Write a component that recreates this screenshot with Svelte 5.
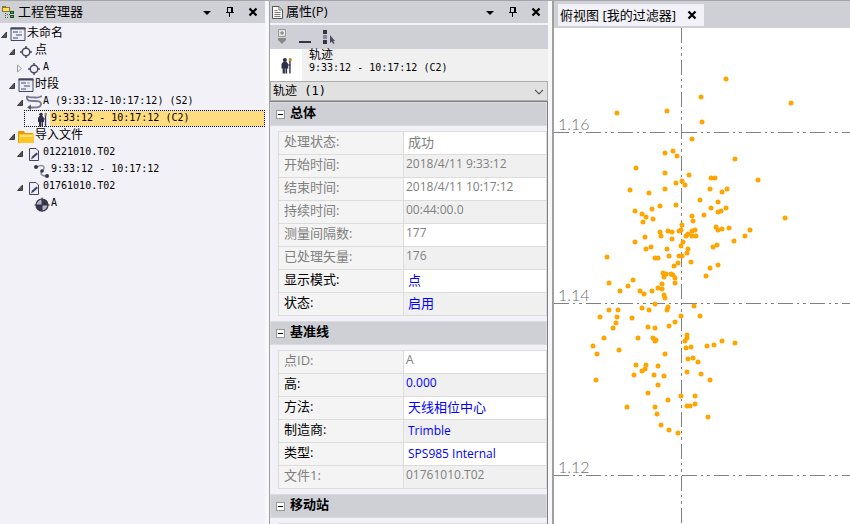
<script>
  let tree = $state([
    { id: 1, depth: 0, icon: 'project', text: '未命名', arrow: 'open' },
    { id: 2, depth: 1, icon: 'point', text: '点', arrow: 'open' },
    { id: 3, depth: 2, icon: 'point', text: 'A', latin: true, arrow: 'closed' },
    { id: 4, depth: 1, icon: 'project', text: '时段', arrow: 'open' },
    { id: 5, depth: 2, icon: 'track', text: 'A (9:33:12-10:17:12) (S2)', latin: true, arrow: 'open' },
    { id: 6, depth: 3, icon: 'rover', text: '9:33:12 - 10:17:12 (C2)', latin: true },
    { id: 7, depth: 1, icon: 'folder', text: '导入文件', arrow: 'open' },
    { id: 8, depth: 2, icon: 'file', text: '01221010.T02', latin: true, arrow: 'open' },
    { id: 9, depth: 3, icon: 'path', text: '9:33:12 - 10:17:12', latin: true },
    { id: 10, depth: 2, icon: 'file', text: '01761010.T02', latin: true, arrow: 'open' },
    { id: 11, depth: 3, icon: 'base', text: 'A', latin: true }
  ]);
  let selected = $state(6);

  let groups = $state([
    {
      title: '总体',
      open: true,
      rows: [
        { label: '处理状态:', value: '成功', cjk: true },
        { label: '开始时间:', value: '2018/4/11 9:33:12' },
        { label: '结束时间:', value: '2018/4/11 10:17:12' },
        { label: '持续时间:', value: '00:44:00.0' },
        { label: '测量间隔数:', value: '177' },
        { label: '已处理矢量:', value: '176' },
        { label: '显示模式:', value: '点', cjk: true, edit: true },
        { label: '状态:', value: '启用', cjk: true, edit: true }
      ]
    },
    {
      title: '基准线',
      open: true,
      rows: [
        { label: '点ID:', value: 'A' },
        { label: '高:', value: '0.000', edit: true },
        { label: '方法:', value: '天线相位中心', cjk: true, edit: true },
        { label: '制造商:', value: 'Trimble', name: true, edit: true },
        { label: '类型:', value: 'SPS985 Internal', name: true, edit: true },
        { label: '文件1:', value: '01761010.T02' }
      ]
    },
    { title: '移动站', open: true, rows: [{ label: '', value: '' }] }
  ]);

  // grid lines, measured inside the plot
  const gridX = 127;
  const gridY = [
    { y: 104, label: '1.16' },
    { y: 275, label: '1.14' },
    { y: 447, label: '1.12' }
  ];

  // epochs are stored in window coordinates, the plot starts at origin
  const origin = [554, 28];
  const epochs = [
    [617,113],[667,111],[665,153],[673,151],[677,156],[636,168],[665,173],[676,183],[682,181],[685,185],
    [630,190],[649,193],[665,189],[635,211],[652,209],[660,206],[676,205],[642,214],[646,217],[653,219],
    [726,79],[701,97],[702,122],[692,139],[791,103],[735,159],[689,175],[711,178],[715,178],[758,180],
    [710,189],[722,192],[727,189],[700,200],[718,202],[711,208],[726,208],[718,212],[721,211],[692,216],
    [704,215],[785,218],[693,221],[643,222],[660,232],[661,236],[668,231],[672,232],[679,231],[682,225],
    [681,230],[645,237],[672,239],[635,242],[683,242],[681,246],[646,249],[651,247],[667,249],[607,257],
    [655,258],[658,258],[669,256],[679,256],[682,256],[678,263],[674,266],[663,273],[666,274],[664,277],
    [671,274],[673,275],[675,278],[675,283],[609,283],[633,280],[628,286],[620,291],[640,291],[644,294],
    [652,291],[662,284],[658,288],[662,289],[664,295],[665,298],[655,304],[642,308],[649,310],[668,307],
    [667,310],[609,310],[618,310],[600,317],[617,317],[632,318],[681,316],[616,323],[613,328],[675,322],
    [669,326],[648,327],[655,328],[716,227],[718,230],[722,229],[729,228],[750,230],[745,236],[734,241],
    [713,247],[717,245],[695,230],[692,231],[688,234],[686,236],[692,236],[696,236],[688,249],[687,253],
    [691,262],[718,265],[710,268],[706,276],[694,306],[700,316],[604,338],[593,346],[597,354],[619,350],
    [638,338],[653,338],[656,340],[655,341],[665,354],[596,380],[636,365],[646,365],[645,369],[642,371],
    [634,375],[658,366],[654,375],[664,376],[658,385],[648,393],[627,407],[668,400],[655,407],[657,414],
    [661,425],[669,430],[678,433],[681,396],[695,396],[695,404],[687,406],[690,406],[708,417],[710,380],
    [701,374],[687,372],[698,362],[693,358],[688,359],[686,348],[691,347],[707,346],[714,345],[722,341],
    [735,343],[685,341],[687,338],[687,335]
  ];

  function toggle(item) {
    if (item.arrow) item.arrow = item.arrow == 'open' ? 'closed' : 'open';
  }
</script>

{#snippet closeIcon()}
  <svg width="10" height="10" viewBox="0 0 10 10"><path d="M1.5 1.5 8.5 8.5M8.5 1.5 1.5 8.5" stroke="#000" stroke-width="2.2" /></svg>
{/snippet}

{#snippet controls()}
  <div class="controls">
    <button aria-label="菜单"><svg width="10" height="10" viewBox="0 0 10 10"><path d="M1 4h8L5 8z" fill="#000" /></svg></button>
    <button aria-label="固定">
      <svg width="10" height="10" viewBox="0 0 10 10" shape-rendering="crispEdges">
        <path d="M2 0h6v1H2zM2 0h1v5H2zM6 0h2v5H6zM1 5h8v1H1zM4 6h1v4H4z" fill="#000" />
      </svg>
    </button>
    <button aria-label="关闭">{@render closeIcon()}</button>
  </div>
{/snippet}

{#snippet rover(size)}
  <svg width={size} height={size} viewBox="0 0 16 16">
    <circle cx="7" cy="3.500" r="1.800" fill="#2f3046" />
    <path d="M4 7 5.500 5h3L10 7v4H9v4.500H7.500V11H7v4.500H5V11H4z" fill="#2f3046" />
    <path d="M11.500 4v11.500" stroke="#3c3d55" stroke-width="1.300" />
    <path d="M9 8h3" stroke="#3c3d55" />
    <rect x="10.500" y="2" width="2.500" height="2.500" fill="#b98a2c" />
  </svg>
{/snippet}

{#snippet icon(kind)}
  {#if kind == 'rover'}
    {@render rover(16)}
  {:else}
    <svg width="16" height="16" viewBox="0 0 16 16">
      {#if kind == 'project'}
        <path d="M1 2h14v12.500H1z" fill="#ececf6" stroke="#45465f" />
        <path d="M.5 1.500h15v2H.5z" fill="#45465f" />
        <path d="M3 5h5v2H3zM6 8h6v2H6zM3 11h5v2H3z" fill="#9a9ab0" />
        <path d="M9 5h3v2H9z" fill="#c4c4d4" />
      {:else if kind == 'point'}
        <circle cx="8" cy="9" r="3.800" fill="#f4f4fa" stroke="#4a4b62" stroke-width="1.500" />
        <path d="M8 3v3M8 12v3M2 9h3M11 9h3" stroke="#4a4b62" stroke-width="1.500" />
      {:else if kind == 'track'}
        <path d="M1 2c2 2.500 5 1 8 1.500s5-.5 7-1.500M1 2c-1 5 3 5 6 5 4 0 8-.5 8 3S11 13.500 3 13.500" fill="none" stroke="#77788c" stroke-width="1.800" />
        <path d="M5 10.500v5.500L1 13.500z" fill="#55566c" />
      {:else if kind == 'folder'}
        <path d="M0 3h6l1 2h8v10H0z" fill="#e79a00" />
        <path d="M1 6h15v9H1z" fill="#ffc629" />
        <path d="M2 7h13v2H2z" fill="#ffe07c" />
      {:else if kind == 'file'}
        <path d="M3.500 3.500H10L12.500 6v9.500h-9z" fill="#eeeef8" stroke="#44455c" />
        <path d="M5 14.500 6 11.500l4.500-4 1.500 1.500-4.500 4z" fill="#44455c" />
      {:else if kind == 'path'}
        <path d="M3 5c5-3 9-1 6 3-3 3-3 6 4 6" fill="none" stroke="#8c8d9f" stroke-width="1.500" />
        <circle cx="2" cy="5" r="2" fill="#34354b" />
        <circle cx="8" cy="9" r="1.800" fill="#34354b" />
        <circle cx="13" cy="14" r="2" fill="#34354b" />
      {:else if kind == 'base'}
        <circle cx="8" cy="9" r="6" fill="#b4b4c4" stroke="#34354b" stroke-width="1.200" />
        <path d="M8 9V3a6 6 0 0 1 6 6zM8 9v6a6 6 0 0 1-6-6z" fill="#34354b" />
        <path d="M8 1.500v15M.5 9h15" stroke="#34354b" />
      {/if}
    </svg>
  {/if}
{/snippet}

<div class="app">
  <aside class="panel explorer">
    <header class="title">
      <svg width="13" height="14" viewBox="0 0 13 14" shape-rendering="crispEdges">
        <path d="M0 1h4v1h4v5H0z" fill="#8a7a28" />
        <path d="M1 3h6v3H1z" fill="#ffe26a" />
        <path d="M3 8h1v1H3zM3 10h1v1H3zM3 12h1v1H3zM5 9h1v1H5zM5 12h1v1H5zM7 9h1v1H7z" fill="#555" />
        <path d="M8 6h4v3H8zM8 10h4v3H8z" fill="#1c4a20" />
        <path d="M9 7h2v1H9zM9 11h2v1H9z" fill="#38c848" />
      </svg>
      <h2>工程管理器</h2>
      {@render controls()}
    </header>
    <ul class="tree">
      {#each tree as item (item.id)}
        <li class="depth{item.depth}" class:selected={selected == item.id}>
          {#if item.arrow}
            <button class="arrow" aria-label="展开" onclick={() => toggle(item)}>
              <svg width="8" height="9" viewBox="0 0 8 9">
                {#if item.arrow == 'open'}
                  <path d="M5.500 2v5.500H.5z" fill="#555" stroke="#222" stroke-width=".8" />
                {:else}
                  <path d="M.5 1v7L4.500 4.500z" fill="#fff" stroke="#999" />
                {/if}
              </svg>
            </button>
          {:else}
            <span class="arrow"></span>
          {/if}
          {@render icon(item.icon)}
          <button class="name" class:latin={item.latin} onclick={() => (selected = item.id)}>{item.text}</button>
        </li>
      {/each}
    </ul>
  </aside>

  <section class="panel props">
    <header class="title">
      <svg width="11" height="13" viewBox="0 0 11 13">
        <path d="M.5.5H7L10.500 4v8.500H.5z" fill="#fff" stroke="#555" />
        <path d="M7 .5V4h3.500M2.500 4.500h3M2.500 6.500h6M2.500 8.500h6M2.500 10.500h6" fill="none" stroke="#777" />
      </svg>
      <h2>属性(P)</h2>
      {@render controls()}
    </header>
    <div class="toolbar">
      <button aria-label="展开全部">
        <svg width="10" height="16" viewBox="0 0 10 16">
          <path d="M1.500.5h7v7h-7z" fill="#e4e4e4" stroke="#999" />
          <path d="M5 2v4M3 4h4" stroke="#777" />
          <path d="M1 9h8v2L5 15 1 11z" fill="#888" />
        </svg>
      </button>
      <button aria-label="折叠全部">
        <svg width="12" height="16" viewBox="0 0 12 16"><path d="M0 12h12v2H0z" fill="#33344a" /></svg>
      </button>
      <button aria-label="选择">
        <svg width="14" height="16" viewBox="0 0 14 16">
          <path d="M0 1h4v4H0zM0 11h4v4H0z" fill="#33344a" />
          <path d="M0 6h4v4H0z" fill="#85869a" />
          <path d="M7 6v8l2-1.500 1 2.500 1.500-.7-1.200-2.300H12z" fill="#4a4b60" />
        </svg>
      </button>
    </div>
    <div class="object">
      <div class="thumb">{@render rover(18)}</div>
      <p>轨迹<br /><span class="latin">9:33:12 - 10:17:12 (C2)</span></p>
    </div>
    <div class="combo">
      <select aria-label="对象"><option>轨迹 (1)</option></select>
      <svg width="10" height="6" viewBox="0 0 10 6"><path d="M1 .8 5 4.800 9 .8" fill="none" stroke="#555" stroke-width="1.200" /></svg>
    </div>
    <div class="grid">
      {#each groups as group}
        <h3>
          <button aria-label={group.title} onclick={() => (group.open = !group.open)}>
            <svg width="9" height="9" viewBox="0 0 9 9" shape-rendering="crispEdges">
              <path d="M0 0h9v9H0z" fill="#999" />
              <path d="M1 1h7v7H1z" fill="#fff" />
              <path d="M2 4h5v1H2z" fill="#000" />
              {#if !group.open}<path d="M4 2h1v5H4z" fill="#000" />{/if}
            </svg>
          </button>
          {group.title}
        </h3>
        {#if group.open}
          <table>
            <tbody>
              {#each group.rows as row}
                <tr class:edit={row.edit}>
                  <th scope="row">{row.label}</th>
                  <td class:cjk={row.cjk} class:proper={row.name}>{row.value}</td>
                </tr>
              {/each}
            </tbody>
          </table>
        {/if}
      {/each}
    </div>
  </section>

  <main class="view">
    <div class="tabs">
      <div class="tab">
        <span>俯视图 [我的过滤器]</span>
        <button aria-label="关闭">{@render closeIcon()}</button>
      </div>
    </div>
    <svg class="plot">
      <g class="lines">
        <line x1={gridX} x2={gridX} y1="0" y2="100%" />
        {#each gridY as g}
          <line x1="0" x2="100%" y1={g.y} y2={g.y} />
        {/each}
      </g>
      {#each gridY as g}
        <text x="4" y={g.y - 2}>{g.label}</text>
      {/each}
      {#each epochs as [x, y]}
        <circle cx={x - origin[0]} cy={y - origin[1]} r="2.5" />
      {/each}
    </svg>
  </main>
</div>

<style>
  :global(body) {
    margin: 0;
    overflow: hidden;
  }
  .app {
    display: flex;
    box-sizing: border-box;
    height: 100vh;
    border-top: 1px solid #a6a6aa;
    background: #f8f8fb;
    color: #000;
    font: 12px/15px 'Open Sans', 'Noto Sans CJK SC', sans-serif;
  }
  button {
    display: flex;
    padding: 0;
    border: 0;
    background: none;
    color: inherit;
    font: inherit;
  }
  h2, h3, p, ul {
    margin: 0;
    padding: 0;
  }
  svg {
    display: block;
    flex: none;
  }
  .latin {
    font-family: 'DejaVu Sans Mono', monospace;
    font-size: 10px;
  }

  .panel {
    display: flex;
    flex-direction: column;
    flex: none;
    overflow: hidden;
    background: #f2f1f7;
  }
  .explorer {
    width: 265px;
    margin-right: 4px;
  }
  .props {
    width: 278px;
    margin-right: 4px;
    border-left: 1px solid #a0a0a0;
  }
  .title {
    display: flex;
    flex: none;
    align-items: center;
    height: 22px;
    padding: 0 3px 0 2px;
    background: #cfd0d6;
  }
  .title h2 {
    flex: 1;
    padding: 0 0 2px 3px;
    font-size: 13px;
    font-weight: 400;
  }
  .controls {
    display: flex;
    gap: 13px;
    padding-right: 4px;
  }

  .tree {
    padding-top: 2px;
    list-style: none;
    font-size: 12px;
  }
  .tree li {
    display: flex;
    align-items: flex-end;
    height: 17px;
    padding-left: 1px;
  }
  .tree .depth1 { padding-left: 9px; }
  .tree .depth2 { padding-left: 17px; }
  .tree .depth3 { padding-left: 25px; }
  .arrow {
    width: 8px;
    height: 12px;
    margin-right: 1px;
  }
  .name {
    flex: 1;
    align-self: stretch;
    padding-left: 1px;
    line-height: 15px;
    white-space: nowrap;
  }
  .tree .selected {
    box-sizing: border-box;
    align-items: center;
    margin-left: 24px;
    padding-left: 0;
    border: 1px dotted #000;
  }
  .selected .name {
    background: #ffdc80;
    line-height: 13px;
  }

  .toolbar {
    display: flex;
    flex: none;
    align-items: center;
    gap: 12px;
    height: 24px;
    margin-top: 2px;
    padding-left: 7px;
    background: #cfd0d6;
  }
  .object {
    display: flex;
    flex: none;
    height: 32px;
    background: #f0f0f0;
  }
  .thumb {
    display: flex;
    align-items: center;
    justify-content: center;
    width: 32px;
    background: #fff;
  }
  .object p {
    padding-left: 7px;
    line-height: 12px;
  }
  .combo {
    position: relative;
    flex: none;
  }
  .combo select {
    display: block;
    width: 100%;
    height: 20px;
    padding: 0 2px;
    appearance: none;
    border: 1px solid #adadad;
    border-radius: 0;
    background: #e1e1e1;
    color: #000;
    font: 12px 'DejaVu Sans Mono', 'Noto Sans CJK SC', monospace;
  }
  .combo svg {
    position: absolute;
    top: 8px;
    right: 4px;
    pointer-events: none;
  }

  .grid {
    flex: 1;
    min-height: 0;
    overflow: hidden;
    border: solid #808080;
    border-width: 1px 1px 0 0;
  }
  h3 {
    display: flex;
    align-items: flex-start;
    box-sizing: border-box;
    height: 24px;
    gap: 5px;
    padding-left: 5px;
    border: 1px solid #dcdcde;
    background: #cfd0d6;
    font-size: 13px;
    font-weight: 700;
    line-height: 18px;
  }
  h3 button {
    margin-top: 7px;
  }
  table {
    width: calc(100% - 8px);
    margin: 5px 0 5px 8px;
    border-collapse: collapse;
    table-layout: fixed;
  }
  tr {
    height: 23px;
    color: #808080;
  }
  .edit th { color: #000; }
  .edit td { color: #00f; }
  th, td {
    box-sizing: border-box;
    height: 23px;
    border: 1px solid #dcdcdc;
    line-height: 18px;
    text-align: left;
    white-space: nowrap;
  }
  th {
    width: 125px;
    padding: 0 5px 4px;
    background: #f4f4f4;
    font-size: 13px;
    font-weight: 400;
  }
  td {
    padding: 0 2px 4px;
    background: #fff;
  }
  tr:nth-child(even) td {
    background: #f0f0f0;
  }
  td.cjk {
    padding: 0 4px 2px;
    font-size: 13px;
  }
  td.proper {
    padding: 0 4px 1px;
  }

  .view {
    display: flex;
    flex: 1;
    flex-direction: column;
    min-width: 0;
    border-left: 2px solid #a0a0a0;
    background: #fff;
  }
  .tabs {
    display: flex;
    flex: none;
    height: 24px;
    padding: 3px 4px 0;
    background: #cfd0d6;
  }
  .tab {
    display: flex;
    align-items: center;
    gap: 11px;
    height: 22px;
    padding: 0 7px 0 2px;
    background: #f2f1f7;
    font-size: 13px;
  }
  .plot {
    flex: 1;
    width: 100%;
    min-height: 0;
  }
  .lines {
    stroke: #808080;
    stroke-dasharray: 15 4 2 4 3 4;
    shape-rendering: crispEdges;
  }
  .plot text {
    fill: #707070;
    font: 300 16px Lato, sans-serif;
  }
  .plot circle {
    fill: #ffa500;
  }
</style>
